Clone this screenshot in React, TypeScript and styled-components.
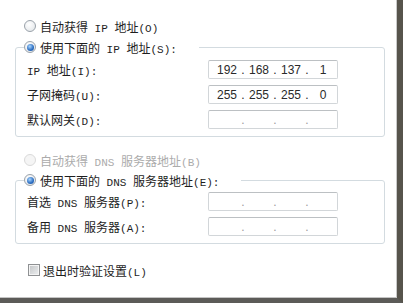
import React from 'react';
import styled, { createGlobalStyle } from 'styled-components';

const Global = createGlobalStyle`
  html, body { margin: 0; padding: 0; background: #fff; }
  body {
    font-family: "Noto Sans CJK SC", "Liberation Sans", sans-serif;
    font-size: 12px;
    color: #1e1e1e;
  }
`;

const Frame = styled.div`
  width: 403px;
  height: 303px;
  box-sizing: border-box;
  border-right: 6px solid #57544c;
  border-bottom: 5px solid #5c5b58;
`;

const Panel = styled.div`
  height: 100%;
  box-sizing: border-box;
  border-right: 1px solid #c9c9c9;
  border-bottom: 1px solid #c4c4c4;
  padding: 16px 0 0 15px;
  background: #fff;
`;

const Choice = styled.div<{ $indent: number; $top?: number; $gap?: number; $disabled?: boolean }>`
  display: flex;
  align-items: center;
  gap: ${p => p.$gap ?? 4}px;
  height: 20px;
  padding-left: ${p => p.$indent}px;
  margin-top: ${p => p.$top ?? 0}px;
  color: ${p => (p.$disabled ? '#ababab' : '#1e1e1e')};
  white-space: pre;
`;

const Half = styled.span`
  font-family: "Liberation Mono", monospace;
  font-size: 11px;
`;

const RadioMark = styled.span<{ $on?: boolean; $off?: boolean }>`
  width: 12px;
  height: 12px;
  box-sizing: border-box;
  flex-shrink: 0;
  border-radius: 50%;
  border: 1px solid ${p => (p.$off ? '#dadada' : '#9aa2aa')};
  background: ${p =>
    p.$off
      ? '#f5f5f5'
      : 'radial-gradient(circle at 40% 35%, #ffffff, #dfe3e7)'};
  display: flex;
  align-items: center;
  justify-content: center;

  &::after {
    content: '';
    display: ${p => (p.$on ? 'block' : 'none')};
    width: 7px;
    height: 7px;
    border-radius: 50%;
    background: radial-gradient(circle at 40% 35%, #a9d6ff, #2a6cc0 60%, #1a4f96);
  }
`;

const CheckMark = styled.span`
  width: 12px;
  height: 12px;
  box-sizing: border-box;
  flex-shrink: 0;
  border: 1px solid #8f9193;
  box-shadow: inset 0 0 0 1px #f4f4f4;
  background: linear-gradient(135deg, #c2c4c6, #eef0f1);
`;

const Group = styled.fieldset<{ $top?: number }>`
  width: 370px;
  box-sizing: border-box;
  margin: ${p => p.$top ?? 0}px 0 0 0;
  padding: 0;
  min-inline-size: auto;
  border: 1px solid #d3dbe0;
  border-radius: 3px;
`;

const Legend = styled.legend`
  margin-left: 8px;
  padding: 0 22px 0 0;
`;

const Fields = styled.div<{ $top: number }>`
  display: grid;
  grid-template-columns: 181px 130px;
  row-gap: 6px;
  align-items: center;
  padding: ${p => p.$top}px 0 7px 11px;
`;

const Label = styled.span`
  white-space: pre;
`;

const IpBox = styled.div`
  display: flex;
  align-items: center;
  height: 19px;
  box-sizing: border-box;
  padding-left: 5px;
  border: 1px solid #d2d6d9;
  border-top-color: #bcc0c3;
  border-radius: 2px;
  background: #fff;
  font-family: "Liberation Sans", Arial, sans-serif;
  font-size: 12px;
  color: #2a2a2a;
`;

const Octet = styled.span`
  width: 26px;
  text-align: center;
`;

const Dot = styled.span<{ $faint?: boolean }>`
  width: 6px;
  text-align: center;
  color: ${p => (p.$faint ? '#9c9c9c' : 'inherit')};
`;

function Txt({ children }: { children: string }) {
  const parts = children.split(/([\x00-\x7f]+)/);
  return (
    <>
      {parts.map((p, i) =>
        /[\x00-\x7f]/.test(p) ? <Half key={i}>{p}</Half> : p
      )}
    </>
  );
}

function Ip({ value }: { value?: string[] }) {
  const oct = value ?? ['', '', '', ''];
  const faint = !value;
  return (
    <IpBox>
      {oct.map((o, i) => (
        <React.Fragment key={i}>
          {i > 0 && <Dot $faint={faint}>.</Dot>}
          <Octet>{o}</Octet>
        </React.Fragment>
      ))}
    </IpBox>
  );
}

function Row({ label, value }: { label: string; value?: string[] }) {
  return (
    <>
      <Label>
        <Txt>{label}</Txt>
      </Label>
      <Ip value={value} />
    </>
  );
}

export default function App() {
  return (
    <>
      <Global />
      <Frame>
        <Panel>
          <Choice $indent={9}>
            <RadioMark />
            <span>
              <Txt>自动获得 IP 地址(O)</Txt>
            </span>
          </Choice>

          <Group $top={1}>
            <Legend>
              <Choice $indent={0}>
                <RadioMark $on />
                <span>
                  <Txt>使用下面的 IP 地址(S):</Txt>
                </span>
              </Choice>
            </Legend>
            <Fields $top={3}>
              <Row label="IP 地址(I):" value={['192', '168', '137', '1']} />
              <Row label="子网掩码(U):" value={['255', '255', '255', '0']} />
              <Row label="默认网关(D):" />
            </Fields>
          </Group>

          <Choice $indent={9} $top={13} $disabled>
            <RadioMark $off />
            <span>
              <Txt>自动获得 DNS 服务器地址(B)</Txt>
            </span>
          </Choice>

          <Group>
            <Legend>
              <Choice $indent={0}>
                <RadioMark $on />
                <span>
                  <Txt>使用下面的 DNS 服务器地址(E):</Txt>
                </span>
              </Choice>
            </Legend>
            <Fields $top={2}>
              <Row label="首选 DNS 服务器(P):" />
              <Row label="备用 DNS 服务器(A):" />
            </Fields>
          </Group>

          <Choice $indent={13} $top={16} $gap={3}>
            <CheckMark />
            <span>
              <Txt>退出时验证设置(L)</Txt>
            </span>
          </Choice>
        </Panel>
      </Frame>
    </>
  );
}
